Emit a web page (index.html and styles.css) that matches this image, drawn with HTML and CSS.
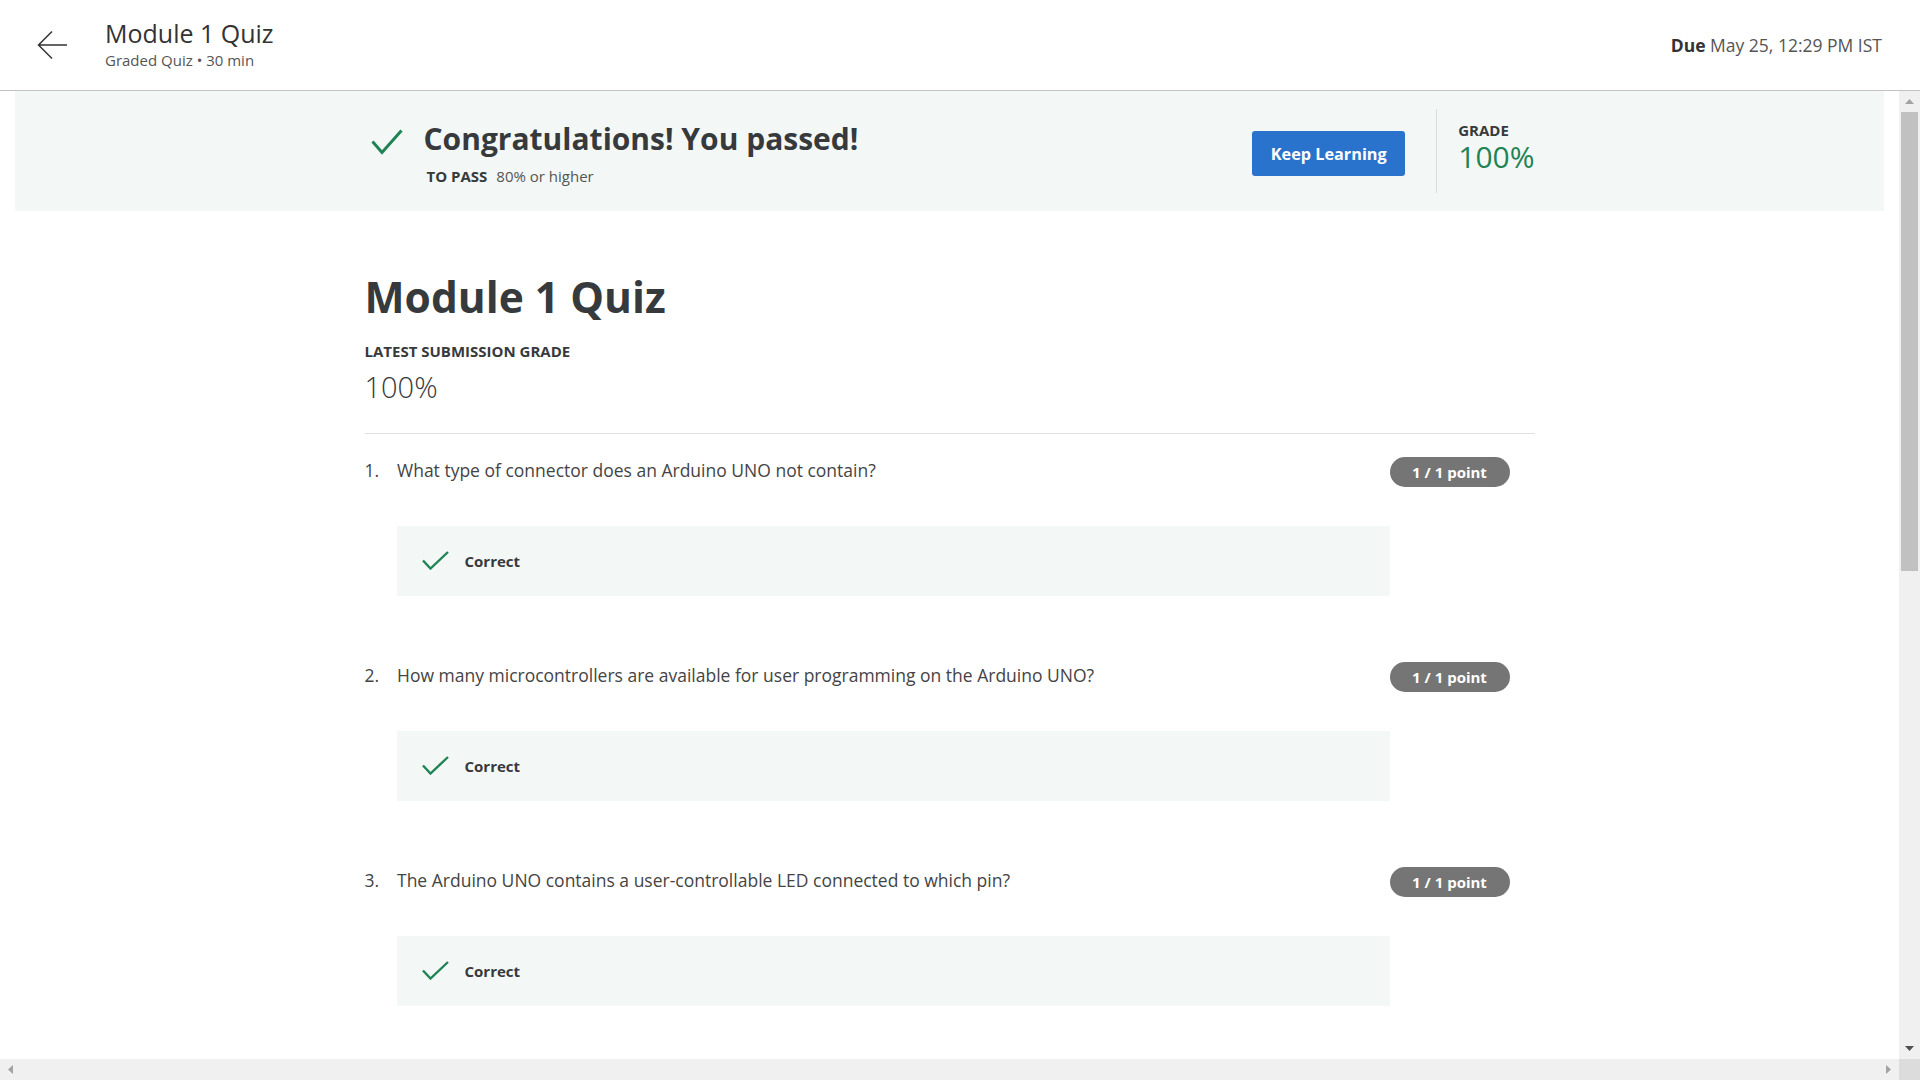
FILE: index.html
```html
<!DOCTYPE html>
<html lang="en">
<head>
<meta charset="utf-8">
<title>Module 1 Quiz</title>
<link rel="stylesheet" href="styles.css">
</head>
<body>
<div class="app">
  <header class="topbar">
    <svg class="back" viewBox="0 0 30 30" aria-hidden="true">
      <path d="M1.5 15 H30 M15 1.5 L1.5 15 L15 28.5" fill="none" stroke="#333" stroke-width="1.5"/>
    </svg>
    <div class="title-block">
      <div class="title">Module 1 Quiz</div>
      <div class="subtitle">Graded Quiz • 30 min</div>
    </div>
    <div class="due"><b>Due</b> May 25, 12:29 PM IST</div>
  </header>

  <main class="viewport">
    <section class="banner">
      <div class="banner-inner">
        <div class="pass">
          <svg class="pass-icon" viewBox="0 0 32 26" aria-hidden="true">
            <polyline points="1.5,12.5 11,23.5 30.5,1.5" fill="none" stroke="#1f8354" stroke-width="3"/>
          </svg>
          <div>
            <div class="pass-title">Congratulations! You passed!</div>
            <div class="pass-req"><span class="req-label">TO PASS</span><span>80% or higher</span></div>
          </div>
        </div>
        <div class="btn">Keep Learning</div>
        <div class="vdivider"></div>
        <div class="grade">
          <div class="grade-label">GRADE</div>
          <div class="grade-value">100%</div>
        </div>
      </div>
    </section>

    <section class="content">
      <h1 class="quiz-title">Module 1 Quiz</h1>
      <div class="label">LATEST SUBMISSION GRADE</div>
      <div class="score">100%</div>
      <div class="rule"></div>

      <ol class="questions">
        <li class="q">
          <div class="q-num">1.</div>
          <div class="q-body">
            <div class="q-text">What type of connector does an Arduino UNO not contain?</div>
            <div class="feedback">
              <svg class="fb-icon" viewBox="0 0 27 19" aria-hidden="true">
                <polyline points="1,9.5 8.5,17.5 26,1" fill="none" stroke="#1f8354" stroke-width="2.4"/>
              </svg>
              <span class="fb-text">Correct</span>
            </div>
          </div>
          <div class="points">1 / 1 point</div>
        </li>
        <li class="q">
          <div class="q-num">2.</div>
          <div class="q-body">
            <div class="q-text">How many microcontrollers are available for user programming on the Arduino UNO?</div>
            <div class="feedback">
              <svg class="fb-icon" viewBox="0 0 27 19" aria-hidden="true">
                <polyline points="1,9.5 8.5,17.5 26,1" fill="none" stroke="#1f8354" stroke-width="2.4"/>
              </svg>
              <span class="fb-text">Correct</span>
            </div>
          </div>
          <div class="points">1 / 1 point</div>
        </li>
        <li class="q">
          <div class="q-num">3.</div>
          <div class="q-body">
            <div class="q-text">The Arduino UNO contains a user-controllable LED connected to which pin?</div>
            <div class="feedback">
              <svg class="fb-icon" viewBox="0 0 27 19" aria-hidden="true">
                <polyline points="1,9.5 8.5,17.5 26,1" fill="none" stroke="#1f8354" stroke-width="2.4"/>
              </svg>
              <span class="fb-text">Correct</span>
            </div>
          </div>
          <div class="points">1 / 1 point</div>
        </li>
      </ol>
    </section>
  </main>

  <div class="vbar">
    <div class="sb-btn"><div class="arrow arrow-up"></div></div>
    <div class="track"><div class="thumb"></div></div>
    <div class="sb-btn"><div class="arrow arrow-down"></div></div>
  </div>
  <div class="hbar">
    <div class="sb-btn hbtn"><div class="arrow arrow-left"></div></div>
    <div class="sb-btn hbtn"><div class="arrow arrow-right"></div></div>
  </div>
  <div class="corner"></div>
</div>
</body>
</html>
```

FILE: styles.css
```css
* { box-sizing: border-box; }
html, body { margin: 0; padding: 0; height: 100%; }
body {
  font-family: "Open Sans", "DejaVu Sans", sans-serif;
  color: #373a3c;
  background: #fff;
  overflow: hidden;
}

.app {
  display: grid;
  width: 1920px;
  height: 1080px;
  grid-template-columns: 1fr 21px;
  grid-template-rows: 91px 1fr 21px;
}

/* Header */
.topbar {
  grid-column: 1 / 3;
  grid-row: 1;
  display: flex;
  align-items: center;
  padding: 0 38px 0 37px;
  border-bottom: 1px solid #c2c2c2;
}
.back { width: 30px; height: 30px; flex: none; margin-right: 38px; }
.title-block { flex: 1; padding-bottom: 4px; }
.title { font-size: 25px; line-height: 32px; font-weight: 400; color: #333; }
.subtitle { font-size: 15px; line-height: 20px; color: #555; margin-top: 1px; }
.due { font-size: 17.5px; line-height: 24px; color: #555; }
.due b { color: #333; font-weight: 700; }

/* Scroll viewport */
.viewport {
  grid-column: 1;
  grid-row: 2;
  overflow: hidden;
}

/* Banner */
.banner {
  margin: 0 15px;
  height: 120px;
  background: #f3f8f7;
}
.banner-inner {
  width: 1170px;
  height: 100%;
  margin: 0 auto;
  display: flex;
  align-items: center;
}
.pass { flex: 1; display: flex; align-items: flex-start; align-self: flex-start; padding-top: 27.5px; }
.pass-icon { width: 32px; height: 26px; flex: none; margin: 10px 21px 0 6px; }
.pass-title { font-size: 30px; line-height: 40px; font-weight: 700; color: #373a3c; }
.pass-req { margin-top: 7.5px; padding-left: 3px; font-size: 15px; line-height: 20px; color: #555; }
.req-label { font-weight: 700; color: #373a3c; margin-right: 9px; }

.btn {
  width: 153px;
  height: 45px;
  margin-top: 5px;
  margin-right: 31px;
  background: #2a73cc;
  color: #fff;
  border-radius: 3px;
  font-size: 16.25px;
  font-weight: 700;
  display: flex;
  align-items: center;
  justify-content: center;
}
.vdivider { width: 1px; height: 84px; background: #dcdcdc; margin-right: 21px; }
.grade { padding-bottom: 9px; }
.grade-label { font-size: 15px; line-height: 20px; font-weight: 700; color: #373a3c; }
.grade-value { font-size: 30px; line-height: 34px; font-weight: 400; color: #1f8354; }

/* Content */
.content { width: 1170px; margin: 0 auto; padding-top: 60px; }
.quiz-title {
  margin: 0;
  font-size: 42.5px;
  line-height: 52px;
  font-weight: 700;
  color: #373a3c;
}
.label { margin-top: 18.2px; font-size: 15px; line-height: 20px; font-weight: 700; color: #373a3c; }
.score { margin-top: 7.5px; font-size: 29px; line-height: 36px; font-weight: 300; color: #373a3c; }
.rule { margin-top: 28.25px; height: 1px; background: #e0e0e0; }

.questions { list-style: none; margin: 0; padding: 23px 0 0 0; }
.q {
  display: flex;
  align-items: flex-start;
  padding-right: 25px;
  margin-bottom: 66px;
}
.q-num { width: 32.5px; flex: none; padding-top: 1px; font-size: 17.5px; line-height: 24px; color: #444; }
.q-body { flex: 1; }
.q-text { padding-top: 1px; font-size: 17.5px; line-height: 24px; color: #444; }
.feedback {
  margin-top: 44px;
  height: 70px;
  background: #f3f8f7;
  display: flex;
  align-items: center;
  padding-left: 25px;
}
.fb-icon { width: 27px; height: 19px; flex: none; margin-right: 15.5px; }
.fb-text { font-size: 15px; line-height: 20px; font-weight: 700; color: #373a3c; }
.points {
  width: 120px;
  height: 30px;
  flex: none;
  border-radius: 15px;
  background: #757575;
  color: #fff;
  font-size: 15px;
  font-weight: 700;
  display: flex;
  align-items: center;
  justify-content: center;
}

/* Scrollbars */
.vbar {
  grid-column: 2;
  grid-row: 2;
  background: #f0f0f0;
  display: flex;
  flex-direction: column;
}
.sb-btn {
  flex: none;
  width: 21px;
  height: 21px;
  display: flex;
  align-items: center;
  justify-content: center;
}
.track { flex: 1; padding: 0 2px; }
.thumb { height: 459px; background: #c1c1c1; }
.hbar {
  grid-column: 1;
  grid-row: 3;
  background: #f0f0f0;
  display: flex;
  justify-content: space-between;
}
.corner { grid-column: 2; grid-row: 3; background: #dcdcdc; }

.arrow { background: #a3a3a3; }
.arrow-up { width: 9px; height: 5px; clip-path: polygon(0 100%, 50% 0, 100% 100%); }
.arrow-down { width: 9px; height: 5px; background: #505050; clip-path: polygon(0 0, 100% 0, 50% 100%); }
.arrow-left { width: 5px; height: 9px; clip-path: polygon(100% 0, 100% 100%, 0 50%); }
.arrow-right { width: 5px; height: 9px; clip-path: polygon(0 0, 100% 50%, 0 100%); }
```
